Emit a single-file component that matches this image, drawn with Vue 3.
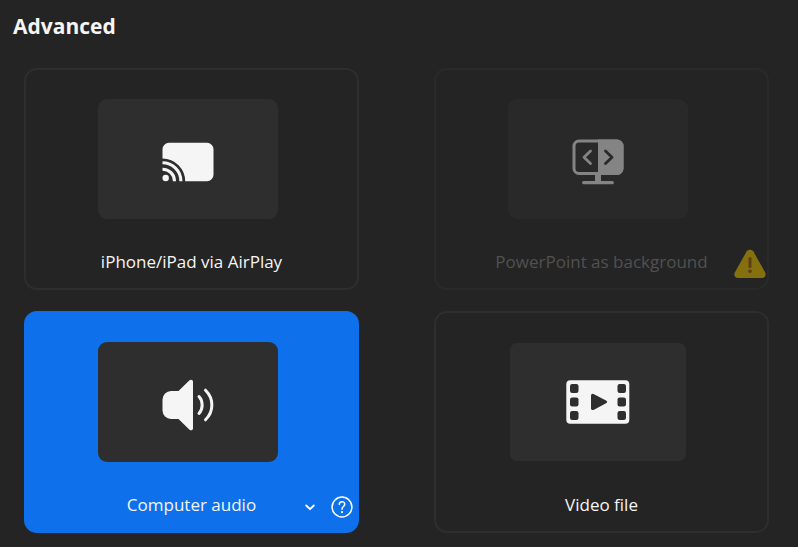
<script setup>
import { ref } from 'vue'

const sources = [
  { id: 'airplay', label: 'iPhone/iPad via AirPlay' },
  { id: 'slides', label: 'PowerPoint as background', disabled: true },
  { id: 'audio', label: 'Computer audio' },
  { id: 'video', label: 'Video file' },
]
const selected = ref('audio')
</script>

<template>
  <main class="panel">
    <h1 class="title">Advanced</h1>
    <div class="grid">
      <div
        v-for="s in sources"
        :key="s.id"
        class="card"
        :class="{ selected: selected === s.id, disabled: s.disabled }"
      >
        <button
          type="button"
          class="choice"
          :disabled="s.disabled"
          :aria-pressed="selected === s.id"
          @click="selected = s.id"
        >
          <span class="thumb" :class="{ compact: s.id === 'video' }">
            <svg v-if="s.id === 'airplay'" width="52" height="40" viewBox="0 0 52 40" aria-hidden="true">
              <path class="fill" d="M7 .8H45a6.500 6.500 0 0 1 6.500 6.500V32.700a6.500 6.500 0 0 1-6.500 6.500H23.200A22.700 22.700 0 0 0 .5 16.500V7.300A6.500 6.500 0 0 1 7 .8Z" />
              <g class="line" stroke-width="3.100">
                <path d="M.5 20.800A18.400 18.400 0 0 1 18.900 39.200" />
                <path d="M.5 27.200A12 12 0 0 1 12.500 39.200" />
              </g>
              <circle class="fill" cx="3.700" cy="36" r="3.200" />
            </svg>

            <svg v-else-if="s.id === 'slides'" width="52" height="46" viewBox="0 0 52 46" aria-hidden="true">
              <rect class="line" x="2" y="2" width="48" height="32.500" rx="5" stroke-width="3" />
              <path class="fill" d="M26 .5H45a6.500 6.500 0 0 1 6.500 6.500V29.500a6.500 6.500 0 0 1-6.500 6.500H26Z" />
              <path class="line" d="M18.500 12 12 18.300 18.500 24.600" stroke-width="2.800" stroke-linecap="round" stroke-linejoin="round" />
              <path class="cut" d="M33.500 12 40 18.300 33.500 24.600" stroke-width="2.800" stroke-linecap="round" stroke-linejoin="round" />
              <path class="fill" d="M23 35h6v8h-6z" />
              <path class="line" d="M11.700 43.700H40.300" stroke-width="3.200" stroke-linecap="round" />
            </svg>

            <svg v-else-if="s.id === 'audio'" width="52" height="52" viewBox="0 0 52 52" aria-hidden="true">
              <path class="fill" d="M9 12H16.500L27.500 1.300C29 .1 31 .7 31 2.800V49.200C31 51.300 29 51.900 27.500 50.700L16.500 40H9A8.700 8.700 0 0 1 .5 31.500V20.500A8.700 8.700 0 0 1 9 12Z" />
              <g class="line" stroke-width="3" stroke-linecap="round">
                <path d="M37 17.500C41.200 22 41.200 30 37 34.500" />
                <path d="M43.500 11.200C52 19.500 52 32.500 43.500 40.800" />
              </g>
            </svg>

            <svg v-else width="64" height="44" viewBox="0 0 64 44" aria-hidden="true">
              <rect class="fill" x=".3" y=".2" width="63" height="43.500" rx="4" />
              <g class="hole">
                <rect x="4" y="4" width="8.500" height="9" rx="2.200" />
                <rect x="4" y="17.400" width="8.500" height="9" rx="2.200" />
                <rect x="4" y="31" width="8.500" height="9" rx="2.200" />
                <rect x="51.500" y="4" width="8.500" height="9" rx="2.200" />
                <rect x="51.500" y="17.400" width="8.500" height="9" rx="2.200" />
                <rect x="51.500" y="31" width="8.500" height="9" rx="2.200" />
                <path d="M27.500 13.900 40.500 20.700Q42 21.900 40.500 23.100L27.500 29.900Q25.200 30.500 25 28.500V15.300Q25.200 13.300 27.500 13.900Z" />
              </g>
            </svg>
          </span>
          <span class="label">{{ s.label }}</span>
        </button>

        <svg v-if="s.disabled" class="warning" width="32" height="30" viewBox="0 0 32 30" role="img" aria-label="Unavailable">
          <path class="sign" d="M12.700 2.300C14 .2 18 .2 19.300 2.300L31.200 23.500C32.500 26 31 29 28 29H4C1 29-.5 26 .8 23.500Z" />
          <path class="mark" d="M16 9.500V17.500" />
          <circle class="dot" cx="16" cy="22.300" r="1.800" />
        </svg>

        <div v-if="s.id === 'audio'" class="tools">
          <button type="button" class="tool" aria-label="Audio options">
            <svg width="10" height="22" viewBox="0 0 10 22" aria-hidden="true">
              <path class="stroke" d="M1.200 9.500 5 13.200 8.800 9.500" stroke-width="1.800" />
            </svg>
          </button>
          <button type="button" class="tool" aria-label="Help">
            <svg width="22" height="22" viewBox="0 0 22 22" aria-hidden="true">
              <circle class="stroke" cx="11" cy="11" r="9.900" stroke-width="1.500" />
              <path class="stroke" d="M8.300 8.400C8.300 4.800 13.700 4.800 13.700 8.200C13.700 10.500 11 10.500 11 13.200" stroke-width="1.500" />
              <circle class="point" cx="11" cy="16.200" r="1.100" />
            </svg>
          </button>
        </div>
      </div>
    </div>
  </main>
</template>

<style>
body {
  background: #242424;
}
</style>

<style scoped>
.panel {
  padding: 12px 29px 14px 24px;
  font-family: "Segoe UI", "Open Sans", "Noto Sans", sans-serif;
  color: #f5f5f5;
}

.title {
  margin: 0 0 28px -11px;
  font-size: 21px;
  line-height: 28px;
  font-weight: 700;
}

.grid {
  display: grid;
  grid-template-columns: 1fr 1fr;
  gap: 21px 75px;
}

.card {
  position: relative;
  box-sizing: border-box;
  border: 2px solid #2e2e2e;
  border-radius: 13px;
}

.choice {
  display: flex;
  flex-direction: column;
  align-items: center;
  gap: 31px;
  width: 100%;
  padding: 29px 0 14px;
  border: 0;
  border-radius: 11px;
  background: none;
  color: inherit;
  font: inherit;
  cursor: pointer;
}

.thumb {
  display: flex;
  align-items: center;
  justify-content: center;
  width: 180px;
  height: 120px;
  margin-right: 7px;
  padding-top: 6px;
  box-sizing: border-box;
  border-radius: 9px;
  background: #2e2e2e;
}

.thumb.compact {
  width: 176px;
  height: 118px;
  margin-top: 1px;
  margin-bottom: 1px;
  padding-top: 0;
  border-radius: 7px;
}

.label {
  font-size: 17px;
  line-height: 24px;
}

.fill {
  fill: #f5f5f5;
}

.line {
  fill: none;
  stroke: #f5f5f5;
}

.cut {
  fill: none;
  stroke: #292929;
}

.hole {
  fill: #2e2e2e;
}

.selected {
  border-color: #0e71eb;
  background: #0e71eb;
}

.disabled {
  border-color: #2a2a2a;
}

.disabled .choice {
  color: #515151;
  cursor: default;
}

.disabled .thumb {
  background: #292929;
}

.disabled .fill {
  fill: #848484;
}

.disabled .line {
  stroke: #848484;
}

.warning {
  position: absolute;
  right: 1px;
  bottom: 9px;
}

.sign {
  fill: #85700f;
}

.mark {
  fill: none;
  stroke: #5f3f12;
  stroke-width: 3;
  stroke-linecap: round;
}

.dot {
  fill: #5f3f12;
}

.tools {
  position: absolute;
  right: 4px;
  bottom: 13px;
  display: flex;
  gap: 16px;
}

.tool {
  display: flex;
  padding: 0;
  border: 0;
  background: none;
  cursor: pointer;
}

.stroke {
  fill: none;
  stroke: #fff;
  stroke-linecap: round;
  stroke-linejoin: round;
}

.point {
  fill: #fff;
}
</style>
